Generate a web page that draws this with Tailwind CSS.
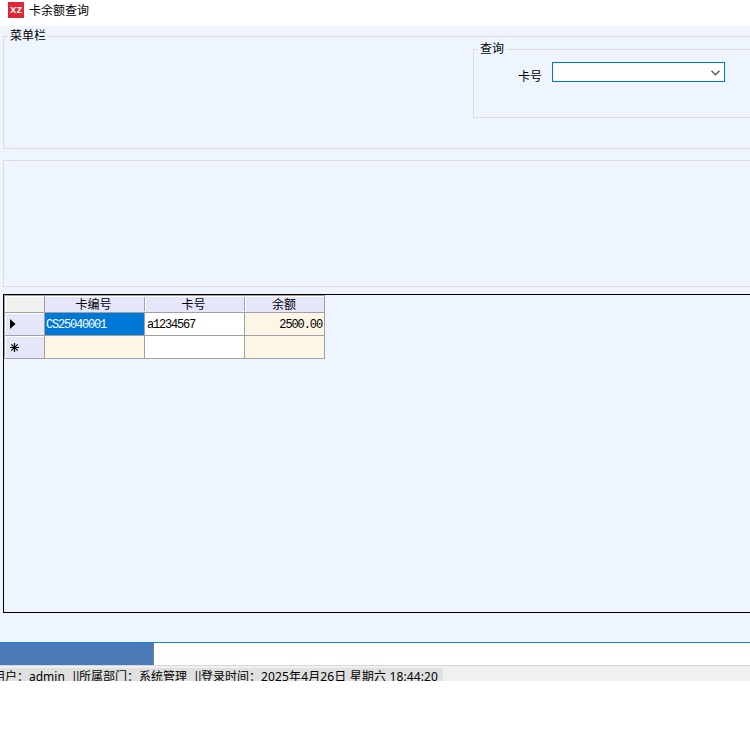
<!DOCTYPE html>
<html lang="zh-CN">
<head>
<meta charset="utf-8">
<title>卡余额查询</title>
<script src="https://cdn.jsdelivr.net/npm/@tailwindcss/browser@4"></script>
</head>
<body class="w-[750px] h-[750px] overflow-hidden bg-white text-black text-[12px] leading-[14px] font-['Noto_Sans','Noto_Sans_CJK_SC',sans-serif] flex flex-col">
  <header class="h-[26px] shrink-0 flex items-start pl-2 pt-[2px]">
    <div class="w-4 h-4 bg-[#e32636] text-white text-[9px] leading-[16px] font-bold text-center tracking-[0.5px] pl-[0.5px] font-['Open_Sans',sans-serif]">XZ</div>
    <h1 class="ml-[5px] mt-[2px] whitespace-nowrap">卡余额查询</h1>
  </header>

  <main class="h-[616px] shrink-0 bg-[#eef5ff] pl-[3px] pt-[10px]">
    <section class="h-[113px] w-[760px] border border-[#dcdcdc] relative pt-[12px] pl-[469px]">
      <h2 class="absolute left-[4px] -top-[8px] px-[2px] bg-[#eef5ff] whitespace-nowrap">菜单栏</h2>
      <div class="h-[69px] border border-[#dcdcdc] relative pt-[12px] pl-[44px] flex items-start">
        <h2 class="absolute left-[4px] -top-[8px] px-[2px] bg-[#eef5ff] whitespace-nowrap">查询</h2>
        <label class="w-[34px] mt-[8px] whitespace-nowrap">卡号</label>
        <div class="w-[173px] h-[20px] bg-white border border-[#0078d7] flex items-center justify-end pr-[4px]">
          <svg class="w-[9px] h-[6px] mt-px" viewBox="0 0 9 6"><path d="M.5.800L4.500 4.800L8.500.800" fill="none" stroke="#555" stroke-width="1.300"/></svg>
        </div>
      </div>
    </section>
    <section class="mt-[11px] h-[127px] w-[760px] border border-[#dcdcdc]"></section>
    <section class="mt-[7px] h-[319px] w-[760px] border border-black">
      <div class="w-[321px] grid grid-cols-[41px_100px_100px_80px] grid-rows-[17px_23px_23px] border-t border-[#a0a0a0] h-[64px]">
        <div class="bg-[#f0f0f0] border-r border-b border-l border-[#a0a0a0] shadow-[inset_1px_1px_0_#fff]"></div>
        <div class="bg-[#e6e6fa] border-b border-[#a0a0a0] shadow-[inset_0_1px_0_#fff] flex justify-between"><span class="w-[97px] text-center mt-[2px]">卡编号</span><i class="w-px h-[14px] mt-px bg-[#a0a0a0]"></i></div>
        <div class="bg-[#e6e6fa] border-b border-[#a0a0a0] shadow-[inset_1px_1px_0_#fff] flex justify-between"><span class="w-[97px] text-center mt-[2px]">卡号</span><i class="w-px h-[14px] mt-px bg-[#a0a0a0]"></i></div>
        <div class="bg-[#e6e6fa] border-b border-r border-[#a0a0a0] shadow-[inset_1px_1px_0_#fff] text-center pt-[2px] pr-px">余额</div>

        <div class="bg-[#e6e6fa] border-x border-b border-[#a0a0a0] shadow-[inset_1px_1px_0_#fff] pl-[5px] pt-[6px]"><svg class="w-[6px] h-[10px]" viewBox="0 0 6 10"><path d="M0 0L5.500 5L0 10z"/></svg></div>
        <div class="bg-[#0078d7] border-r border-b border-[#a0a0a0] text-white pl-px pt-[5px] font-['Liberation_Mono',monospace] text-[12px] tracking-[-1.2px]">CS25040001</div>
        <div class="bg-white border-r border-b border-[#a0a0a0] pl-[2px] pt-[5px] font-['Liberation_Mono',monospace] text-[12px] tracking-[-1.2px]">a1234567</div>
        <div class="bg-[#fdf5e6] border-r border-b border-[#a0a0a0] pr-[2px] pt-[5px] text-right font-['Liberation_Mono',monospace] text-[12px] tracking-[-1.1px]">2500.00</div>

        <div class="bg-[#e6e6fa] border-x border-b border-[#a0a0a0] shadow-[inset_1px_1px_0_#fff] pl-[5px] pt-[7px]"><svg class="w-[9px] h-[9px]" viewBox="0 0 9 9"><path d="M4.500 0v9M0 4.500h9M1.300 1.300l6.400 6.400M7.700 1.300L1.300 7.700" stroke="#000" stroke-width="1.200"/></svg></div>
        <div class="bg-[#fdf5e6] border-r border-b border-[#a0a0a0]"></div>
        <div class="bg-white border-r border-b border-[#a0a0a0]"></div>
        <div class="bg-[#fdf5e6] border-r border-b border-[#a0a0a0]"></div>
      </div>
    </section>
  </main>

  <div class="h-[23px] shrink-0 border-t border-[#1883d7] bg-white"><div class="w-[154px] h-full bg-[#4a7ab8] border-r border-[#808080]"></div></div>
  <footer class="h-[16px] shrink-0 overflow-hidden bg-[#f0f0f0] border-t border-[#d7d7d7] pt-[2px]">
    <div class="w-[443px] h-[13px] bg-[#e0e0e0] overflow-hidden">
      <div class="flex whitespace-nowrap -ml-[7px] mt-[2px]">
        <span class="w-[36px]">用户：</span><span class="w-[42px]">admin</span><span class="w-[8px] tracking-[-3.1px]">||</span><span class="w-[60px]">所属部门：</span><span class="w-[54px]">系统管理</span><span class="w-[8px] tracking-[-3.1px]">||</span><span class="w-[60px]">登录时间：</span><span class="tracking-[0.14px]">2025年4月26日 星期六 18:44:20</span>
      </div>
    </div>
  </footer>
</body>
</html>
